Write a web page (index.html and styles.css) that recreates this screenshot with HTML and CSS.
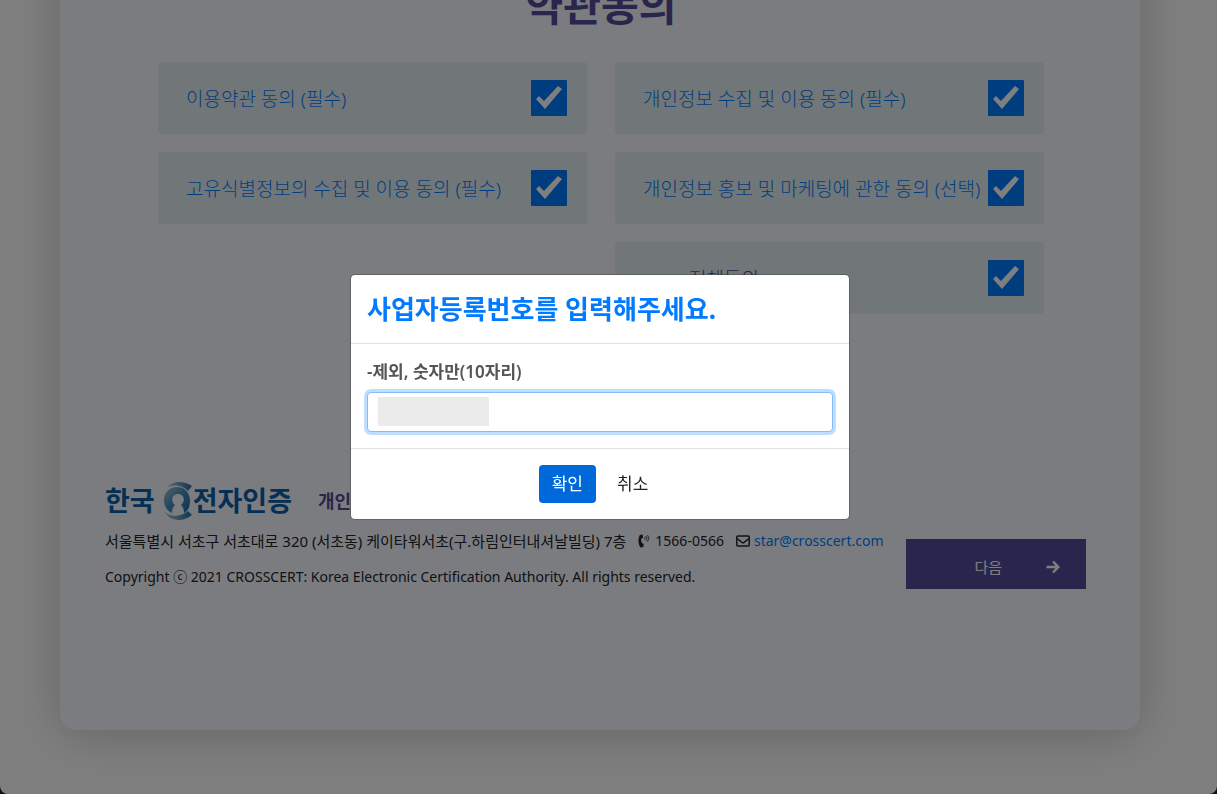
FILE: index.html
```html
<!DOCTYPE html>
<html lang="ko">
<head>
    <meta charset="UTF-8">
    <meta name="viewport" content="width=device-width, initial-scale=1.0">
    <title>약관동의</title>
    <link rel="stylesheet" href="styles.css">
</head>
<body>
    <div class="page">
        <main class="card">
            <h1 class="card-title">약관동의</h1>
            <form class="agree-list">
                <div class="agree-item">
                    <label for="agree1">이용약관 동의 (필수)</label>
                    <input type="checkbox" id="agree1" class="agree-check" checked>
                </div>
                <div class="agree-item">
                    <label for="agree2">개인정보 수집 및 이용 동의 (필수)</label>
                    <input type="checkbox" id="agree2" class="agree-check" checked>
                </div>
                <div class="agree-item">
                    <label for="agree3">고유식별정보의 수집 및 이용 동의 (필수)</label>
                    <input type="checkbox" id="agree3" class="agree-check" checked>
                </div>
                <div class="agree-item">
                    <label for="agree4">개인정보 홍보 및 마케팅에 관한 동의 (선택)</label>
                    <input type="checkbox" id="agree4" class="agree-check" checked>
                </div>
                <div class="agree-item agree-all">
                    <label for="agree-all">전체동의</label>
                    <input type="checkbox" id="agree-all" class="agree-check" checked>
                </div>
            </form>
            <footer class="footer">
                <div class="company">
                    <div class="brand">
                        <div class="logo">
                            <span>한국</span>
                            <svg width="30" height="40" viewBox="0 0 30 40" aria-hidden="true">
                                <defs>
                                    <linearGradient id="swoosh" x1="0" y1="0" x2="1" y2="0">
                                        <stop offset="0" stop-color="#b8d2e2"/>
                                        <stop offset="1" stop-color="#1d6ea8"/>
                                    </linearGradient>
                                    <linearGradient id="ring" x1="0" y1="0" x2="1" y2="1">
                                        <stop offset="0" stop-color="#a9cadd"/>
                                        <stop offset="0.450" stop-color="#4a8fbb"/>
                                        <stop offset="1" stop-color="#1d6ea8"/>
                                    </linearGradient>
                                </defs>
                                <path d="M4 7C9 0 20-1 29 5L25 10C19 4 10 3 4 7Z" fill="url(#swoosh)"/>
                                <path d="M1 30C6 40 19 42 29 34L25 30C18 36 8 37 1 30Z" fill="url(#swoosh)"/>
                                <path d="M14 6C6 6 1 12 1 19C1 25 4 30 9 32C9 28 10 26 12 24C7 20 9 13 15 13C21 13 23 20 18 24C20 26 21 28 21 32C25 30 27 26 27 20C27 12 22 6 14 6Z" fill="url(#ring)"/>
                            </svg>
                            <span>전자인증</span>
                        </div>
                        <strong class="policy">개인정보처리방침</strong>
                    </div>
                    <p class="address">
                        <span class="street">서울특별시 서초구 서초대로 320 (서초동) 케이타워서초(구.하림인터내셔날빌딩) 7층</span>
                        <span class="contact">
                            <svg width="13" height="14" viewBox="0 0 13 14" aria-hidden="true">
                                <path d="M4.500 .5L1.800 1C-.2 5-.1 9.500 2.600 13.500L5.300 13L5.700 10L3.900 9.100C3.200 7.500 3 6 3.300 4.700L5.200 3.500Z" fill="currentColor"/>
                                <path d="M6.500 3Q7.500 4.200 6.500 5.500M8 2Q10 4.200 8 6.500M9.500 1Q12.500 4.200 9.500 7.500" fill="none" stroke="currentColor" stroke-width=".8"/>
                            </svg>
                            1566-0566
                        </span>
                        <span class="contact">
                            <svg width="14" height="12" viewBox="0 0 14 12" fill="none" stroke="currentColor" stroke-width="1.500" aria-hidden="true">
                                <rect x=".8" y="1" width="12.400" height="10" rx="1"/>
                                <path d="M1 3.500L6 7.300Q7 8 8 7.300L13 3.500"/>
                            </svg>
                            <a href="mailto:star@crosscert.com">star@crosscert.com</a>
                        </span>
                    </p>
                    <p class="copyright">Copyright ⓒ 2021 CROSSCERT: Korea Electronic Certification Authority. All rights reserved.</p>
                </div>
                <button type="button" class="next-button">
                    <span>다음</span>
                    <svg width="14" height="14" viewBox="0 0 14 14" fill="none" stroke="currentColor" stroke-width="2.400" aria-hidden="true">
                        <path d="M.5 7H12M7 1.500L12.300 7L7 12.500"/>
                    </svg>
                </button>
            </footer>
        </main>
    </div>

    <div class="backdrop">
        <div class="modal" role="dialog" aria-modal="true" aria-labelledby="modal-title">
            <div class="modal-header">
                <h2 id="modal-title" class="modal-title">사업자등록번호를 입력해주세요.</h2>
            </div>
            <div class="modal-body">
                <label for="biz-number">-제외, 숫자만(10자리)</label>
                <div class="input-wrap">
                    <input type="text" id="biz-number" class="biz-input" maxlength="10">
                    <span class="masked"></span>
                </div>
            </div>
            <div class="modal-footer">
                <button type="button" class="btn btn-primary">확인</button>
                <button type="button" class="btn">취소</button>
            </div>
        </div>
    </div>
</body>
</html>
```
FILE: styles.css
```css
:root {
    --blue: #007bff;
    --purple: #544a98;
    --line: #dee2e6;
}
* {
    box-sizing: border-box;
}
html {
    background-color: #222;
}
body {
    margin: 0;
    font-family: "Noto Sans", "Noto Sans CJK KR", sans-serif;
    font-size: 17px;
    line-height: 24px;
    color: #212529;
}
button, input {
    font: inherit;
}
.page {
    min-height: 100vh;
    padding: 0 77px 64px 60px;
    background-color: #fff;
    border-radius: 0 0 8px 8px;
    overflow: hidden;
}
/* the page is scrolled, so the card starts above the window */
.card {
    margin-top: -80px;
    padding: 60px 54px 141px 45px;
    background-color: #f6f8ff;
    border-radius: 16px;
    box-shadow: 0 4px 50px rgba(0, 0, 0, 0.22);
}
.card-title {
    margin: 0 0 32px 11px;
    font-size: 41px;
    line-height: 50px;
    text-align: center;
    color: var(--purple);
}
.agree-list {
    display: grid;
    grid-template-columns: 1fr 1fr;
    gap: 18px 28px;
    margin: 0 42px 167px 53px;
}
.agree-item {
    display: flex;
    align-items: center;
    justify-content: space-between;
    height: 72px;
    padding: 0 20px 0 28px;
    background-color: #e2eef2;
    border-radius: 4px;
    font-size: 19px;
    font-weight: 300;
    line-height: 28px;
    white-space: nowrap;
    color: var(--blue);
}
.agree-item label {
    flex: 1;
    min-width: 0;
    padding-top: 2px;
}
.agree-all {
    grid-column: 2;
    padding-left: 74px;
    color: var(--purple);
}
.agree-check {
    appearance: none;
    flex: none;
    width: 36px;
    height: 36px;
    margin: 0;
    background-color: #007bff;
    border-radius: 1px;
}
.agree-check:checked::before {
    content: "";
    display: block;
    height: 36px;
    background-color: #fff;
    clip-path: polygon(5px 19px, 8px 16px, 13px 21px, 27px 6px, 31px 9px, 14px 29px);
}
.footer {
    display: flex;
    align-items: flex-end;
    justify-content: space-between;
    font-size: 14px;
}
.brand {
    display: flex;
    align-items: center;
    gap: 26px;
    height: 40px;
    margin-bottom: 8px;
}
.logo {
    display: flex;
    align-items: center;
    font-size: 27px;
    font-weight: bold;
    color: #0b5fa8;
}
.logo svg {
    margin-left: 8px;
}
.policy {
    font-size: 18px;
    white-space: nowrap;
    color: var(--purple);
}
.address, .copyright {
    margin: 0;
    white-space: nowrap;
}
.address {
    display: flex;
    gap: 12px;
    margin-bottom: 12px;
}
.street {
    font-size: 15px;
}
.contact {
    display: flex;
    align-items: center;
    gap: 4px;
}
a {
    color: var(--blue);
    text-decoration: none;
}
.next-button {
    display: flex;
    align-items: center;
    justify-content: flex-end;
    gap: 44px;
    width: 180px;
    height: 50px;
    padding: 6px 26px 0 0;
    background-color: var(--purple);
    border: none;
    font-size: 15px;
    color: #fff;
    cursor: pointer;
}
.backdrop {
    position: fixed;
    inset: 0;
    display: flex;
    align-items: center;
    justify-content: center;
    padding-right: 17px;
    background-color: rgba(0, 0, 0, 0.5);
}
.modal {
    width: 500px;
    background-color: #fff;
    background-clip: padding-box;
    border: 1px solid rgba(0, 0, 0, 0.2);
    border-radius: 5px;
}
.modal-header {
    padding: 16px;
    border-bottom: 1px solid var(--line);
}
.modal-title {
    margin: 0;
    font-size: 26px;
    line-height: 36px;
    color: var(--blue);
}
.modal-body {
    padding: 16px;
}
.modal-body label {
    display: block;
    margin-bottom: 8px;
    font-weight: 600;
    color: #555;
}
.input-wrap {
    position: relative;
}
.biz-input {
    display: block;
    width: 100%;
    height: 40px;
    padding: 6px 12px;
    border: 1px solid #80bdff;
    border-radius: 4px;
    outline: none;
    box-shadow: 0 0 0 3px rgba(0, 123, 255, 0.25);
}
.masked {
    position: absolute;
    top: 5px;
    left: 11px;
    width: 111px;
    height: 29px;
    background-color: #ebebeb;
}
.modal-footer {
    display: flex;
    justify-content: center;
    gap: 8px;
    padding: 16px;
    border-top: 1px solid var(--line);
}
.btn {
    height: 38px;
    padding: 6px 13px;
    background-color: transparent;
    border: none;
    border-radius: 4px;
    color: #212529;
    cursor: pointer;
}
.btn-primary {
    background-color: #0069d9;
    color: #fff;
}
```
